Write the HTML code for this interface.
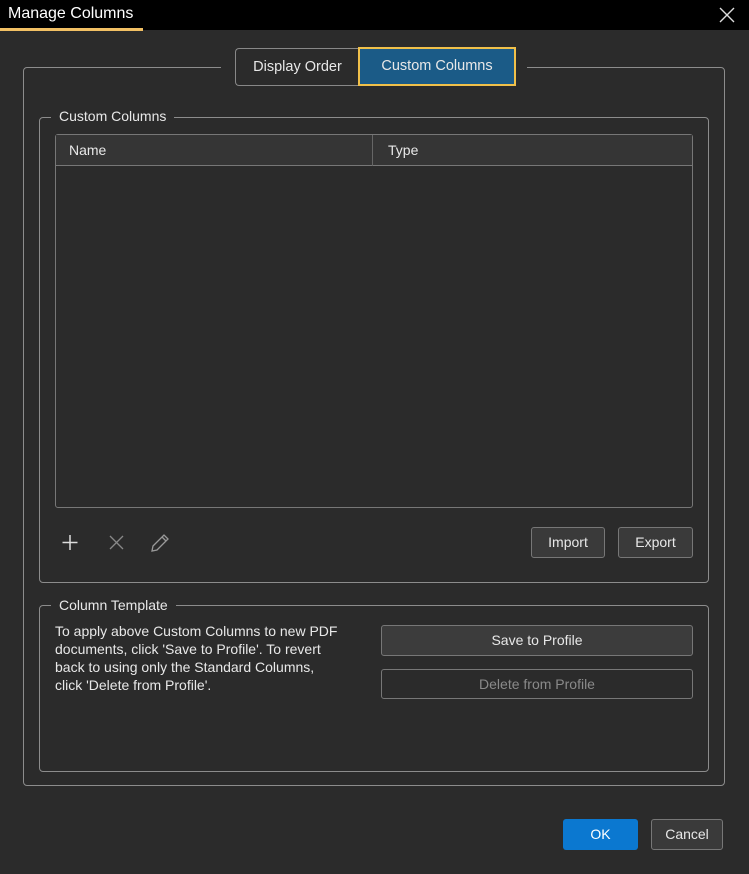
<!DOCTYPE html>
<html><head><style>
*{box-sizing:border-box;margin:0;padding:0}
body{width:749px;height:874px;background:#2b2b2b;font-family:"Liberation Sans",sans-serif;color:#e8e8e8;position:relative;overflow:hidden;font-size:14px}
.a{position:absolute}
.title{left:0;top:0;width:749px;height:30px;background:#000}
.gb{border:1px solid #8c8c8c;border-radius:4px}
.lg{background:#2b2b2b;padding:0 8px;font-size:14px;color:#e8e8e8}
.btn{border:1px solid #777;border-radius:3px;background:#3a3a3a;text-align:center;font-size:14px}
</style></head><body>
<div class="a title"></div>
<div class="a" style="left:8px;top:5px;font-size:16px;color:#fff">Manage Columns</div>
<div class="a" style="left:0;top:28px;width:143px;height:3px;background:#f2c064"></div>
<svg class="a" style="left:719px;top:7px" width="16" height="16"><path d="M1 1l14 14M15 1L1 15" stroke="#ddd" stroke-width="1.4"/></svg>

<div class="a gb" style="left:23px;top:67px;width:702px;height:719px"></div>
<div class="a" style="left:221px;top:60px;width:306px;height:14px;background:#2b2b2b"></div>
<div class="a" style="left:235px;top:48px;width:124px;height:38px;border:1px solid #888;border-right:none;border-radius:4px 0 0 4px;background:#2b2b2b;line-height:36px;text-align:center;font-size:14.5px">Display Order</div>
<div class="a" style="left:358px;top:47px;width:158px;height:39px;border:2px solid #f0c04a;background:#1b5b87;line-height:35px;text-align:center;font-size:14.5px">Custom Columns</div>

<div class="a gb" style="left:39px;top:117px;width:670px;height:466px"></div>
<div class="a lg" style="left:51px;top:108px">Custom Columns</div>
<div class="a" style="left:55px;top:134px;width:638px;height:374px;border:1px solid #777;border-radius:3px;background:#2b2b2b"></div>
<div class="a" style="left:56px;top:135px;width:636px;height:31px;background:#353535;border-bottom:1px solid #777"></div>
<div class="a" style="left:372px;top:135px;width:1px;height:31px;background:#666"></div>
<div class="a" style="left:69px;top:142px">Name</div>
<div class="a" style="left:388px;top:142px">Type</div>

<svg class="a" style="left:60px;top:532px" width="120" height="22"><path d="M10 3v15M2.5 10.5h15" stroke="#ddd" stroke-width="1.5"/><path d="M50 4l13 13M63 4L50 17" stroke="#888" stroke-width="1.3"/><path d="M92 19l1-5 11-11 4 4-11 11z M102 5l4 4" stroke="#999" stroke-width="1.3" fill="none"/></svg>
<div class="a btn" style="left:531px;top:527px;width:74px;height:31px;line-height:29px">Import</div>
<div class="a btn" style="left:618px;top:527px;width:75px;height:31px;line-height:29px">Export</div>

<div class="a gb" style="left:39px;top:605px;width:670px;height:167px"></div>
<div class="a lg" style="left:51px;top:597px">Column Template</div>
<div class="a" style="left:55px;top:622px;width:330px;line-height:18px;white-space:nowrap">To apply above Custom Columns to new PDF<br>documents, click 'Save to Profile'. To revert<br>back to using only the Standard Columns,<br>click 'Delete from Profile'.</div>
<div class="a btn" style="left:381px;top:625px;width:312px;height:31px;line-height:29px;background:#3c3c3c">Save to Profile</div>
<div class="a btn" style="left:381px;top:669px;width:312px;height:30px;line-height:28px;background:#2b2b2b;color:#8a8a8a">Delete from Profile</div>

<div class="a" style="left:563px;top:819px;width:75px;height:31px;border-radius:3px;background:#0b78d0;text-align:center;line-height:31px;color:#fff">OK</div>
<div class="a btn" style="left:651px;top:819px;width:72px;height:31px;line-height:29px">Cancel</div>
</body></html>
